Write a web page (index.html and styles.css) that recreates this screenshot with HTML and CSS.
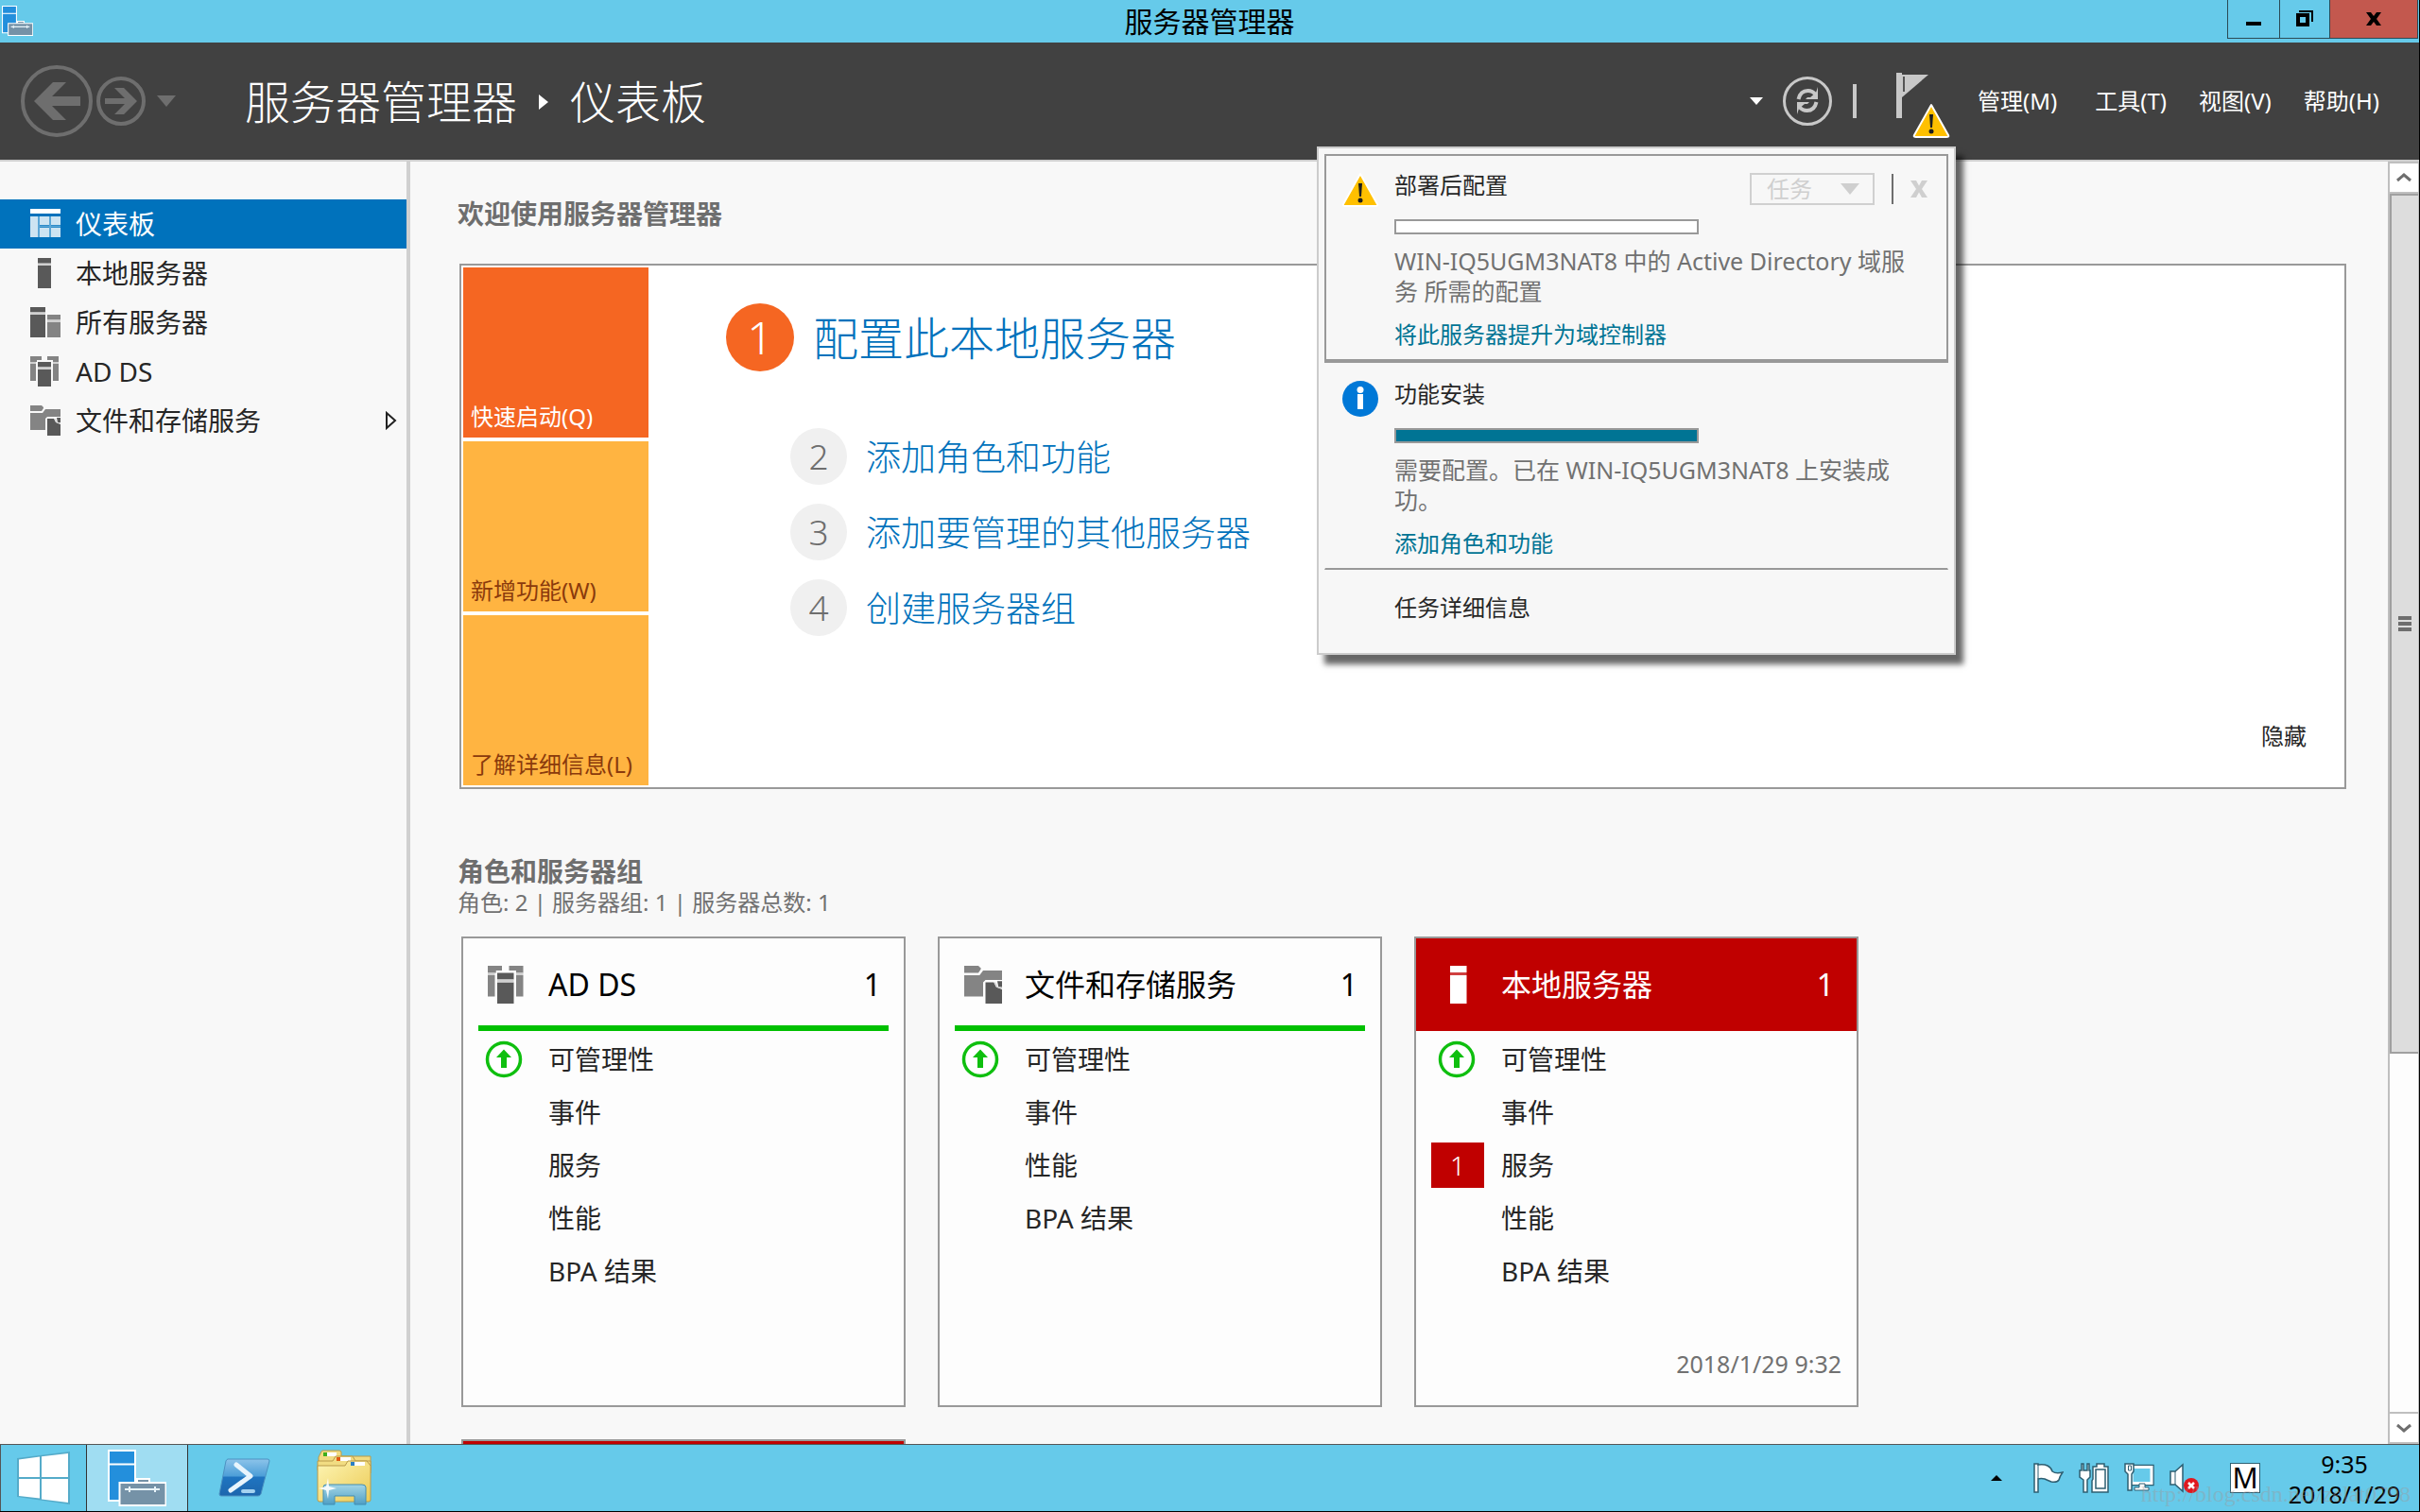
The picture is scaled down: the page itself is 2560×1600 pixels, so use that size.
FILE: index.html
```html
<!DOCTYPE html>
<html lang="zh-CN">
<head>
<meta charset="utf-8">
<title>服务器管理器</title>
<link rel="stylesheet" href="styles.css">
</head>
<body>
<svg class="defs" aria-hidden="true">
  <symbol id="i-server-tools" viewBox="0 0 62 60">
    <path d="M1 1h28v53H1z" fill="#238fdc" stroke="#fff" stroke-width="2"/>
    <path d="M1 15.500h28" stroke="#fff" stroke-width="2"/>
    <path d="M31 35v-4h13v4" fill="#7592a7" stroke="#fff" stroke-width="2"/>
    <path d="M12.500 35h49v24h-49z" fill="#7592a7" stroke="#fff" stroke-width="2"/>
    <path d="M18 42h37M23 39v6M50 39v6" stroke="#e8f4fa" stroke-width="2" fill="none"/>
  </symbol>
  <symbol id="i-dashboard" viewBox="0 0 32 32">
    <path d="M0 0h32v5H0z" fill="#fff"/>
    <path d="M0 8h8v22H0zM10 8h10v9H10zM22 8h10v9H22zM10 20h10v10H10zM22 20h10v10H22z" fill="#cde4f2"/>
    <path d="M8 8h2v22H8zM20 8h2v22h-2zM10 17.500h22v2H10z" fill="#5ba6d6"/>
  </symbol>
  <symbol id="i-server" viewBox="0 0 32 32">
    <path d="M8 0h14v5.500H8zM8 8h14v24H8z" fill="currentColor"/>
    <path d="M8 5.500h14V8H8z" fill="currentColor" opacity=".25"/>
  </symbol>
  <symbol id="i-servers" viewBox="0 0 32 32">
    <path d="M0 0h16v5.500H0zM0 8h16v24H0z" fill="#595959"/>
    <path d="M18 8h14v5.500H18zM18 16h14v16H18z" fill="#848484"/>
    <path d="M0 5.500h16V8H0zM18 13.500h14V16H18z" fill="#d0d0d0"/>
  </symbol>
  <symbol id="i-adds" viewBox="0 0 32 32">
    <path d="M0 0h12v4H7v2H0zM18 0h12v6h-6V4h-6zM0 8h6v18H0zM24 8h6v18h-6z" fill="#848484"/>
    <path d="M8 6h14v5.500H8zM8 14h14v18H8z" fill="#595959"/>
    <path d="M8 11.500h14V14H8zM0 6h6v2H0zM24 6h6v2h-6z" fill="#d0d0d0"/>
  </symbol>
  <symbol id="i-files" viewBox="0 0 32 32">
    <path d="M0 0h12l2 2v1l-2 3H0z" fill="#848484"/>
    <path d="M0 8h13l3-4h16v8H18l-2 2v12H0z" fill="#848484"/>
    <path d="M18 14h7l2 4 5 2v12H18zM28 13h4v5h-3z" fill="#595959"/>
    <path d="M26 14l2 4 4 1" fill="none" stroke="#d0d0d0"/>
  </symbol>
  <symbol id="i-warning" viewBox="0 0 40 38">
    <path d="M20 2 38 34q1 2-2 2H4q-3 0-2-2z" fill="#ffc000" stroke="#fff" stroke-width="2" stroke-linejoin="round"/>
    <path d="M18 12h4l-1 14h-2z" fill="#1e1e1e"/><circle cx="20" cy="30" r="2.500" fill="#1e1e1e"/>
  </symbol>
  <symbol id="i-info" viewBox="0 0 38 38">
    <circle cx="19" cy="19" r="19" fill="#0078d7"/>
    <circle cx="19" cy="9.500" r="3.500" fill="#fff"/><path d="M16 14h6v16h-6z" fill="#fff"/>
  </symbol>
  <symbol id="i-up" viewBox="0 0 40 40">
    <circle cx="20" cy="20" r="17.500" fill="#fff" stroke="#0fbf0f" stroke-width="3.500"/>
    <path d="M20 9.500 28 18h-5v11h-6V18h-5z" fill="#0fbf0f"/>
  </symbol>
</svg>

<header class="titlebar">
  <svg class="app-icon"><use href="#i-server-tools"/></svg>
  <h1 class="window-title">服务器管理器</h1>
  <div class="window-buttons">
    <button class="win-btn" aria-label="最小化"><svg width="16" height="16"><path d="M0 11h16v4H0z"/></svg></button>
    <button class="win-btn win-restore" aria-label="还原"><svg width="18" height="18" viewBox="0 0 18 18"><path d="M3 1h14v11" fill="none" stroke="#000" stroke-width="2"/><path d="M2 5h10v10H2z" fill="none" stroke="#000" stroke-width="4"/></svg></button>
    <button class="win-btn win-close" aria-label="关闭"><svg width="16" height="14" viewBox="0 0 16 14"><path d="M0 0h5l3 4 3-4h5l-5 7 5 7h-5l-3-4-3 4H0l5-7z"/></svg></button>
  </div>
</header>

<div class="toolbar">
  <div class="history">
    <button class="plain" aria-label="后退"><svg width="76" height="76" viewBox="0 0 76 76"><circle cx="38" cy="38" r="36" fill="none" stroke="#6e6e6e" stroke-width="4"/><path d="M14 38 34 18h14L33 33h30v10H33l15 15H34z" fill="#6e6e6e"/></svg></button>
    <button class="plain" aria-label="前进"><svg width="52" height="52" viewBox="0 0 52 52"><circle cx="26" cy="26" r="24" fill="none" stroke="#6e6e6e" stroke-width="4"/><path d="M43 26 29 12H19l11 11H9v6h21L19 40h10z" fill="#6e6e6e"/></svg></button>
    <button class="plain history-more" aria-label="历史记录"><svg width="20" height="12"><path d="M0 0h20L10 12z" fill="#6e6e6e"/></svg></button>
  </div>
  <div class="breadcrumb">
    <span>服务器管理器</span>
    <svg width="10" height="16"><path d="M0 0 10 8 0 16z" fill="#fff"/></svg>
    <span>仪表板</span>
  </div>
  <div class="actions">
    <button class="plain" aria-label="刷新选项"><svg width="14" height="8"><path d="M0 0h14L7 8z" fill="#fff"/></svg></button>
    <button class="plain refresh" aria-label="刷新"><svg width="54" height="54" viewBox="0 0 54 54"><circle cx="27" cy="27" r="24.500" fill="none" stroke="#c8c8c8" stroke-width="3"/><path d="M17.500 25q2-9 10-9 5 0 8 4M36.500 28q-2 9-10 9-5 0-8-4" fill="none" stroke="#c8c8c8" stroke-width="4"/><path d="M38 12v13H25l2-2h3l6-5zM16 41V28h13l-2 2h-3l-6 5z" fill="#c8c8c8"/></svg></button>
    <span class="divider"></span>
    <button class="plain notify" aria-label="通知">
      <svg class="flag" width="36" height="48" viewBox="0 0 36 48"><path d="M0 0h6v48H0z" fill="#c8c8c8"/><path d="M6 2h28L6 26z" fill="#c8c8c8"/><path d="M8 4v16" stroke="#555" stroke-width="2"/></svg>
      <svg class="flag-warning"><use href="#i-warning"/></svg>
    </button>
    <nav class="menus">
      <button class="plain">管理(M)</button>
      <button class="plain">工具(T)</button>
      <button class="plain">视图(V)</button>
      <button class="plain">帮助(H)</button>
    </nav>
  </div>

  <section class="flyout" aria-label="通知">
    <article class="note note-active">
      <svg class="note-icon"><use href="#i-warning"/></svg>
      <div class="note-body">
        <div class="note-head">
          <h3>部署后配置</h3>
          <button class="task-btn" disabled>任务 <svg width="20" height="12"><path d="M0 0h20L10 12z" fill="#cfcfcf"/></svg></button>
          <span class="note-sep"></span>
          <button class="plain note-close" disabled aria-label="删除"><svg width="18" height="18" viewBox="0 0 18 18"><path d="M0 0h6l3 5.500L12 0h6l-6 9 6 9h-6l-3-5.500L6 18H0l6-9z" fill="#cfcfcf"/></svg></button>
        </div>
        <progress max="100" value="0" aria-label="部署后配置"></progress>
        <p>WIN-IQ5UGM3NAT8 中的 Active Directory 域服务 所需的配置</p>
        <a href="#promote">将此服务器提升为域控制器</a>
      </div>
    </article>
    <article class="note">
      <svg class="note-icon"><use href="#i-info"/></svg>
      <div class="note-body">
        <div class="note-head"><h3>功能安装</h3></div>
        <progress max="100" value="100" aria-label="功能安装"></progress>
        <p>需要配置。已在 WIN-IQ5UGM3NAT8 上安装成功。</p>
        <a href="#add-roles">添加角色和功能</a>
      </div>
    </article>
    <button class="plain details">任务详细信息</button>
  </section>
</div>

<div class="workspace">
  <nav class="sidebar">
    <a class="side-item selected" href="#dashboard"><svg class="side-icon"><use href="#i-dashboard"/></svg>仪表板</a>
    <a class="side-item" href="#local"><svg class="side-icon"><use href="#i-server"/></svg>本地服务器</a>
    <a class="side-item" href="#all"><svg class="side-icon"><use href="#i-servers"/></svg>所有服务器</a>
    <a class="side-item" href="#adds"><svg class="side-icon"><use href="#i-adds"/></svg>AD DS</a>
    <a class="side-item" href="#files"><svg class="side-icon"><use href="#i-files"/></svg>文件和存储服务<svg class="expand" width="14" height="20"><path d="M2 2v16l9-8z" fill="#fff" stroke="#222" stroke-width="2"/></svg></a>
  </nav>

  <main class="content">
    <h2>欢迎使用服务器管理器</h2>
    <section class="welcome">
      <div class="tiles">
        <button class="tile tile-on">快速启动(Q)</button>
        <button class="tile">新增功能(W)</button>
        <button class="tile">了解详细信息(L)</button>
      </div>
      <ol class="steps">
        <li class="step step-main"><span class="num">1</span><a href="#configure">配置此本地服务器</a></li>
        <li class="step"><span class="num">2</span><a href="#roles">添加角色和功能</a></li>
        <li class="step"><span class="num">3</span><a href="#servers">添加要管理的其他服务器</a></li>
        <li class="step"><span class="num">4</span><a href="#group">创建服务器组</a></li>
      </ol>
      <button class="plain hide">隐藏</button>
    </section>

    <h2 class="groups-title">角色和服务器组</h2>
    <p class="groups-sub">角色: 2 | 服务器组: 1 | 服务器总数: 1</p>
    <section class="cards">
      <article class="card">
        <header class="card-head"><svg class="card-icon"><use href="#i-adds"/></svg><h3>AD DS</h3><span>1</span></header>
        <ul>
          <li><svg class="ok"><use href="#i-up"/></svg><a href="#m1">可管理性</a></li>
          <li><a href="#e1">事件</a></li>
          <li><a href="#s1">服务</a></li>
          <li><a href="#p1">性能</a></li>
          <li><a href="#b1">BPA 结果</a></li>
        </ul>
      </article>
      <article class="card">
        <header class="card-head"><svg class="card-icon"><use href="#i-files"/></svg><h3>文件和存储服务</h3><span>1</span></header>
        <ul>
          <li><svg class="ok"><use href="#i-up"/></svg><a href="#m2">可管理性</a></li>
          <li><a href="#e2">事件</a></li>
          <li><a href="#p2">性能</a></li>
          <li><a href="#b2">BPA 结果</a></li>
        </ul>
      </article>
      <article class="card card-alert">
        <header class="card-head"><svg class="card-icon"><use href="#i-server"/></svg><h3>本地服务器</h3><span>1</span></header>
        <ul>
          <li><svg class="ok"><use href="#i-up"/></svg><a href="#m3">可管理性</a></li>
          <li><a href="#e3">事件</a></li>
          <li><span class="badge">1</span><a href="#s3">服务</a></li>
          <li><a href="#p3">性能</a></li>
          <li><a href="#b3">BPA 结果</a></li>
        </ul>
        <time>2018/1/29 9:32</time>
      </article>
      <article class="card card-alert"><header class="card-head"></header></article>
    </section>
  </main>

  <div class="scrollbar">
    <button class="scroll-btn" aria-label="向上滚动"><svg width="16" height="12"><path d="M1 9l7-6 7 6" fill="none" stroke="#6e6e6e" stroke-width="3"/></svg></button>
    <div class="track"><div class="thumb"><svg width="14" height="16"><path d="M0 0h14v4H0zM0 6h14v4H0zM0 12h14v4H0z" fill="#6e6e6e"/></svg></div></div>
    <button class="scroll-btn" aria-label="向下滚动"><svg width="16" height="12"><path d="M1 3l7 6 7-6" fill="none" stroke="#6e6e6e" stroke-width="3"/></svg></button>
  </div>
</div>

<footer class="taskbar">
  <button class="task start" aria-label="开始"><svg width="58" height="58" viewBox="0 0 58 58"><path d="M1 8 57 1v56L1 49z" fill="#55abc9"/><path d="M3 9.500 25 6.500V28H3zM27 6.300 55 3v25H27zM3 30h22v20.500L3 48zM27 30h28v25l-28-3.500z" fill="#fff"/></svg></button>
  <button class="task active" aria-label="服务器管理器"><svg width="62" height="60"><use href="#i-server-tools"/></svg></button>
  <button class="task" aria-label="PowerShell"><svg width="60" height="44" viewBox="0 0 60 44">
    <defs><linearGradient id="ps" x1="0" y1="0" x2="0" y2="1"><stop offset="0" stop-color="#8cc4ea"/><stop offset=".45" stop-color="#4e9fd8"/><stop offset=".5" stop-color="#1f74c0"/><stop offset="1" stop-color="#1d66ad"/></linearGradient></defs>
    <path d="M13 2h42q2 0 2 2l-9 35q-1 2-3 2H6q-2 0-2-2L11 4q1-2 2-2z" fill="url(#ps)" stroke="#4c92c2"/>
    <path d="M22 8 37 20 16 35" fill="none" stroke="#e8f5fd" stroke-width="5" stroke-linecap="round" stroke-linejoin="round"/><path d="M29 36h11" stroke="#a5d2f0" stroke-width="4" stroke-linecap="round"/></svg></button>
  <button class="task" aria-label="文件资源管理器"><svg width="60" height="60" viewBox="0 0 60 60">
    <defs><linearGradient id="fo" x1="0" y1="0" x2="1" y2="1"><stop offset="0" stop-color="#fdf5b4"/><stop offset="1" stop-color="#eccb55"/></linearGradient><linearGradient id="gl" x1="0" y1="0" x2="0" y2="1"><stop offset="0" stop-color="#a4d6e6"/><stop offset="1" stop-color="#4f9fc5"/></linearGradient></defs>
    <path d="M3 8l3-6q0-1 2-1h17q2 0 2 2v4h31v18H3z" fill="#f1dc82" stroke="#b99a4a"/><path d="M8 3h14v4H8z" fill="#fff"/><path d="M8 3h4v4H8z" fill="#3fae1c"/>
    <path d="M2 16v-4h16l3-5h18l3 5h16v10H2z" fill="#f1dc82" stroke="#b99a4a"/><path d="M22 8h15v4H22z" fill="#fff"/><path d="M22 8h4v4h-4z" fill="#e25a12"/>
    <path d="M2 17h29l3-5h20l4 5v36q0 2-2 2H4q-2 0-2-2z" fill="url(#fo)" stroke="#b99a4a"/><path d="M37 13h15v4H37z" fill="#fff"/><path d="M37 13h4v4h-4z" fill="#2c7fc4"/>
    <path d="M8 58V40q0-3 3-3h38q4 0 4 3v18H41v-9H20v9z" fill="url(#gl)" stroke="#438db2"/>
    <path d="M13 30l1 9 8 2-8 2-1 9-2-9-8-2 8-2z" fill="#fff" opacity=".9"/></svg></button>
  <div class="tray">
    <button class="plain tray-more" aria-label="显示隐藏的图标"><svg width="12" height="6"><path d="M0 6h12L6 0z"/></svg></button>
    <button class="plain" aria-label="操作中心"><svg width="32" height="32" viewBox="0 0 32 32"><path d="M1 1h4v1q6-1 10 1 4 2 5 6 4 3 11 1-3 4-4 8-2 3-8 2-5-2-7-3-4-1-7 0v14H1z" fill="#fff" stroke="#2e5f72" stroke-width="1.500"/><path d="M5 2v15" stroke="#2e5f72"/></svg></button>
    <button class="plain" aria-label="电源"><svg width="32" height="32" viewBox="0 0 32 32"><path d="M3 1h2v7h4V1h2v7h1v7l-3 3v13H5V18l-4-3V8h2z" fill="#fff" stroke="#2e5f72" stroke-width="1.500"/><path d="M15 4h4V1h8v3h4v27H14V19l1-2z" fill="#fff" stroke="#2e5f72" stroke-width="1.500"/><path d="M18 7h10v20H18z" fill="#fff" stroke="#2e5f72" stroke-width="1.500"/></svg></button>
    <button class="plain" aria-label="网络"><svg width="32" height="32" viewBox="0 0 32 32"><path d="M8 4.500h21v17H8z" fill="none" stroke="#2e5f72" stroke-width="5.500"/><path d="M8 4.500h21v17H8z" fill="#66caea" stroke="#fff" stroke-width="3"/><path d="M16 22h6v4h4v3H11v-3h5z" fill="#fff" stroke="#2e5f72"/><path d="M1 1h9v8l-2 3v17H4V12L1 9z" fill="#fff" stroke="#2e5f72" stroke-width="1.500"/><path d="M4.500 3h3v5h-3z" fill="none" stroke="#2e5f72"/></svg></button>
    <button class="plain" aria-label="音量"><svg width="32" height="32" viewBox="0 0 32 32"><path d="M1 9h5L14 2v28l-8-7H1z" fill="#fff" stroke="#2e5f72" stroke-width="1.500"/><path d="M6 9v14" stroke="#2e5f72"/><circle cx="23" cy="24" r="8" fill="#e0181e"/><path d="M20 21l6 6M26 21l-6 6" stroke="#fff" stroke-width="2.500"/></svg></button>
    <button class="ime" aria-label="输入法">M</button>
    <div class="clock"><time>9:35</time><time>2018/1/29</time></div>
  </div>
  <span class="watermark">http://blog.csdn.net/zelat0798</span>
</footer>
</body>
</html>
```
FILE: styles.css
```css
* { box-sizing: border-box; }
html, body { height: 100%; }
body {
  margin: 0;
  display: flex;
  flex-direction: column;
  overflow: hidden;
  background: #f8f8f8;
  border-right: 1px solid #000;
  border-bottom: 1px solid #000;
  color: #262626;
  font-family: "Noto Sans", "Noto Sans CJK SC", sans-serif;
  font-size: 24px;
  line-height: 32px;
}
h1, h2, h3, p, ul, ol { margin: 0; padding: 0; list-style: none; font-weight: 400; }
a { color: inherit; text-decoration: none; }
svg { display: block; flex: none; }
button { font: inherit; color: inherit; margin: 0; padding: 0; border: 0; background: none; white-space: nowrap; }
.defs { position: absolute; width: 0; height: 0; }
.plain { display: block; }

/* title bar */
.titlebar { display: grid; grid-template-columns: 1fr auto 1fr; height: 45px; flex: none; background: #66caea; color: #000; }
.app-icon { width: 33px; height: 32px; margin: 6px 2px; }
.window-title { font-size: 30px; line-height: 46px; }
.window-buttons { display: flex; justify-self: end; height: 41px; margin-right: 1px; }
.win-btn { display: flex; align-items: center; justify-content: center; width: 56px; border: 1px solid #2a4a55; border-top: 0; }
.win-restore { width: 52px; border-left: 0; border-right: 0; }
.win-close { width: 94px; background: #c3584e; }

/* toolbar */
.toolbar { position: relative; display: flex; align-items: center; height: 126px; flex: none; background: #414141; border-bottom: 2px solid #cfcfcf; color: #fff; }
.history { display: flex; align-items: center; gap: 4px; width: 259px; padding-left: 22px; }
.history-more { margin-left: 8px; }
.breadcrumb { display: flex; align-items: center; gap: 23px; padding-top: 2px; font-size: 48px; line-height: 72px; font-weight: 300; }
.actions { display: flex; align-items: center; margin-left: auto; padding-right: 42px; }
.refresh { margin-left: 20px; }
.divider { width: 4px; height: 36px; margin-left: 21px; background: #c8c8c8; }
.notify { position: relative; width: 58px; height: 72px; margin-left: 42px; }
.flag { margin-bottom: 12px; }
.flag-warning { position: absolute; right: 0; bottom: -4px; width: 42px; height: 38px; }
.menus { display: flex; gap: 34px; margin-left: 28px; }
.menus :first-child { margin-right: 6px; }

/* notification flyout */
.flyout { position: absolute; z-index: 2; top: 110px; right: 490px; width: 676px; padding: 6px; background: #f7f7f7; border: 2px solid #ccc; box-shadow: 8px 10px 6px rgba(0, 0, 0, .6); color: #262626; }
.note { display: flex; gap: 16px; padding: 18px 20px 10px 17px; border: 1px solid transparent; border-bottom: 2px solid #999; }
.note-active { padding: 17px 20px 10px 16px; border: 2px solid #999; border-bottom-width: 4px; }
.note-icon { width: 40px; height: 38px; }
.note-body { flex: 1; }
.note-head { display: flex; align-items: center; height: 36px; }
.note-head h3 { flex: 1; padding-bottom: 8px; font-size: 24px; line-height: 32px; }
.task-btn { display: flex; align-items: center; justify-content: space-between; width: 132px; height: 34px; padding: 0 14px 0 16px; border: 2px solid #d0d0d0; color: #cfcfcf; line-height: 30px; }
.note-sep { width: 2px; height: 32px; margin: 0 18px; background: #6e6e6e; }
progress { display: block; width: 322px; height: 16px; margin: 14px 0 12px; appearance: none; border: 2px solid #999; background: #fff; }
progress::-webkit-progress-bar { background: #fff; }
progress::-webkit-progress-value { background: #007494; }
.note p { width: 550px; color: #717171; margin-bottom: 14px; font-size: 25px; }
.note a { display: block; color: #007494; }
.details { margin: 24px 0 26px 74px; }

/* workspace */
.workspace { display: flex; flex: 1; min-height: 0; }
.sidebar { flex: none; width: 434px; padding-top: 40px; border-right: 4px solid #d0d0d0; }
.side-item { display: flex; align-items: center; gap: 16px; height: 52px; padding: 0 9px 0 32px; font-size: 28px; }
.side-item.selected { background: #0072bc; color: #fff; }
.side-icon { width: 32px; height: 32px; color: #595959; }
.side-item.selected .side-icon { color: #fff; }
.expand { margin-left: auto; }
.content { flex: 1; min-width: 0; overflow: hidden; padding: 36px 44px 0 50px; }
h2 { font-size: 28px; line-height: 38px; font-weight: 700; color: #6e6e6e; }
.welcome { display: flex; margin: 34px 0 68px 2px; padding: 2px; background: #fff; border: 2px solid #999; }
.tiles { display: grid; gap: 4px; width: 196px; }
.tile { display: flex; align-items: flex-end; height: 180px; padding: 6px 8px; background: #ffb441; color: #8a3a0c; }
.tile-on { background: #f56622; color: #fff; }
.steps { display: flex; flex-direction: column; gap: 20px; padding: 38px 0 0 82px; font-weight: 300; }
.step { display: flex; align-items: center; gap: 20px; margin-left: 68px; font-size: 37px; color: #0072bc; }
.step a { padding-top: 2px; }
.num { width: 60px; height: 60px; border-radius: 50%; background: #f0f0f0; color: #6e6e6e; line-height: 60px; text-align: center; }
.step-main { margin: 0 0 40px; font-size: 48px; }
.step-main .num { width: 72px; height: 72px; background: #f56622; color: #fff; line-height: 72px; }
.hide { align-self: flex-end; margin: 0 38px 36px auto; }

.groups-sub { line-height: 28px; color: #717171; }
.cards { display: grid; grid-template-columns: repeat(auto-fill, 470px); gap: 34px; margin: 22px 504px 0 4px; }
.card { display: flex; flex-direction: column; height: 498px; background: #fdfdfd; border: 2px solid #999; }
.card-head { display: flex; align-items: center; gap: 24px; height: 98px; margin: 0 16px; padding: 6px 8px 0 10px; border-bottom: 6px solid #00c000; color: #000; font-size: 32px; line-height: 44px; }
.card-head h3 { flex: 1; font-size: 32px; }
.card-icon { width: 40px; height: 40px; }
.card-alert .card-head { margin: 0; padding: 6px 24px 0 26px; border-color: #c00000; background: #c00000; color: #fff; }
.card ul { flex: 1; padding: 2px 16px; font-size: 28px; }
.card li { display: flex; align-items: center; justify-content: flex-end; height: 56px; }
.card li a { width: 360px; }
.card li .ok, .card li .badge { margin-right: auto; }
.ok { width: 40px; height: 40px; margin-left: 7px; }
.badge { width: 56px; height: 48px; background: #c00000; color: #fff; font-weight: 300; line-height: 48px; text-align: center; }
.card > time { align-self: flex-end; padding: 0 16px 28px; color: #717171; font-size: 25px; }

/* scroll bar */
.scrollbar { display: flex; flex-direction: column; width: 33px; border-left: 2px solid #bfbfbf; border-right: 1px solid #bfbfbf; background: #fdfdfd; }
.scroll-btn { display: flex; align-items: center; justify-content: center; height: 34px; border-top: 2px solid #bfbfbf; border-bottom: 2px solid #bfbfbf; background: #fff; }
.track { flex: 1; }
.thumb { display: flex; align-items: center; justify-content: center; height: calc(100% * 12 / 17); background: #ddd; border: 2px solid #a0a0a0; border-right: 0; }

/* taskbar */
.taskbar { position: relative; display: flex; flex: none; height: 71px; background: #66caea; border-top: 1px solid #555; border-left: 1px solid #555; color: #000; }
.task { display: flex; align-items: center; justify-content: center; width: 106px; }
.start { width: 90px; }
.active { width: 108px; margin-right: 6px; background: #a0ddf2; border: solid #333; border-width: 0 1px; }
.tray { display: flex; align-items: center; gap: 16px; margin-left: auto; }
.tray-more { margin-right: 17px; }
.ime { width: 32px; height: 32px; margin-left: 16px; background: #fff; border: 1px solid #2e5f72; font-size: 30px; line-height: 30px; }
.clock { display: grid; width: 136px; margin: 0 11px 0 5px; padding-top: 2px; text-align: center; font-size: 25px; }
.watermark { position: absolute; right: 9px; bottom: 2px; color: rgba(160, 150, 150, .4); font-family: "Liberation Serif", serif; font-size: 24px; }
```
